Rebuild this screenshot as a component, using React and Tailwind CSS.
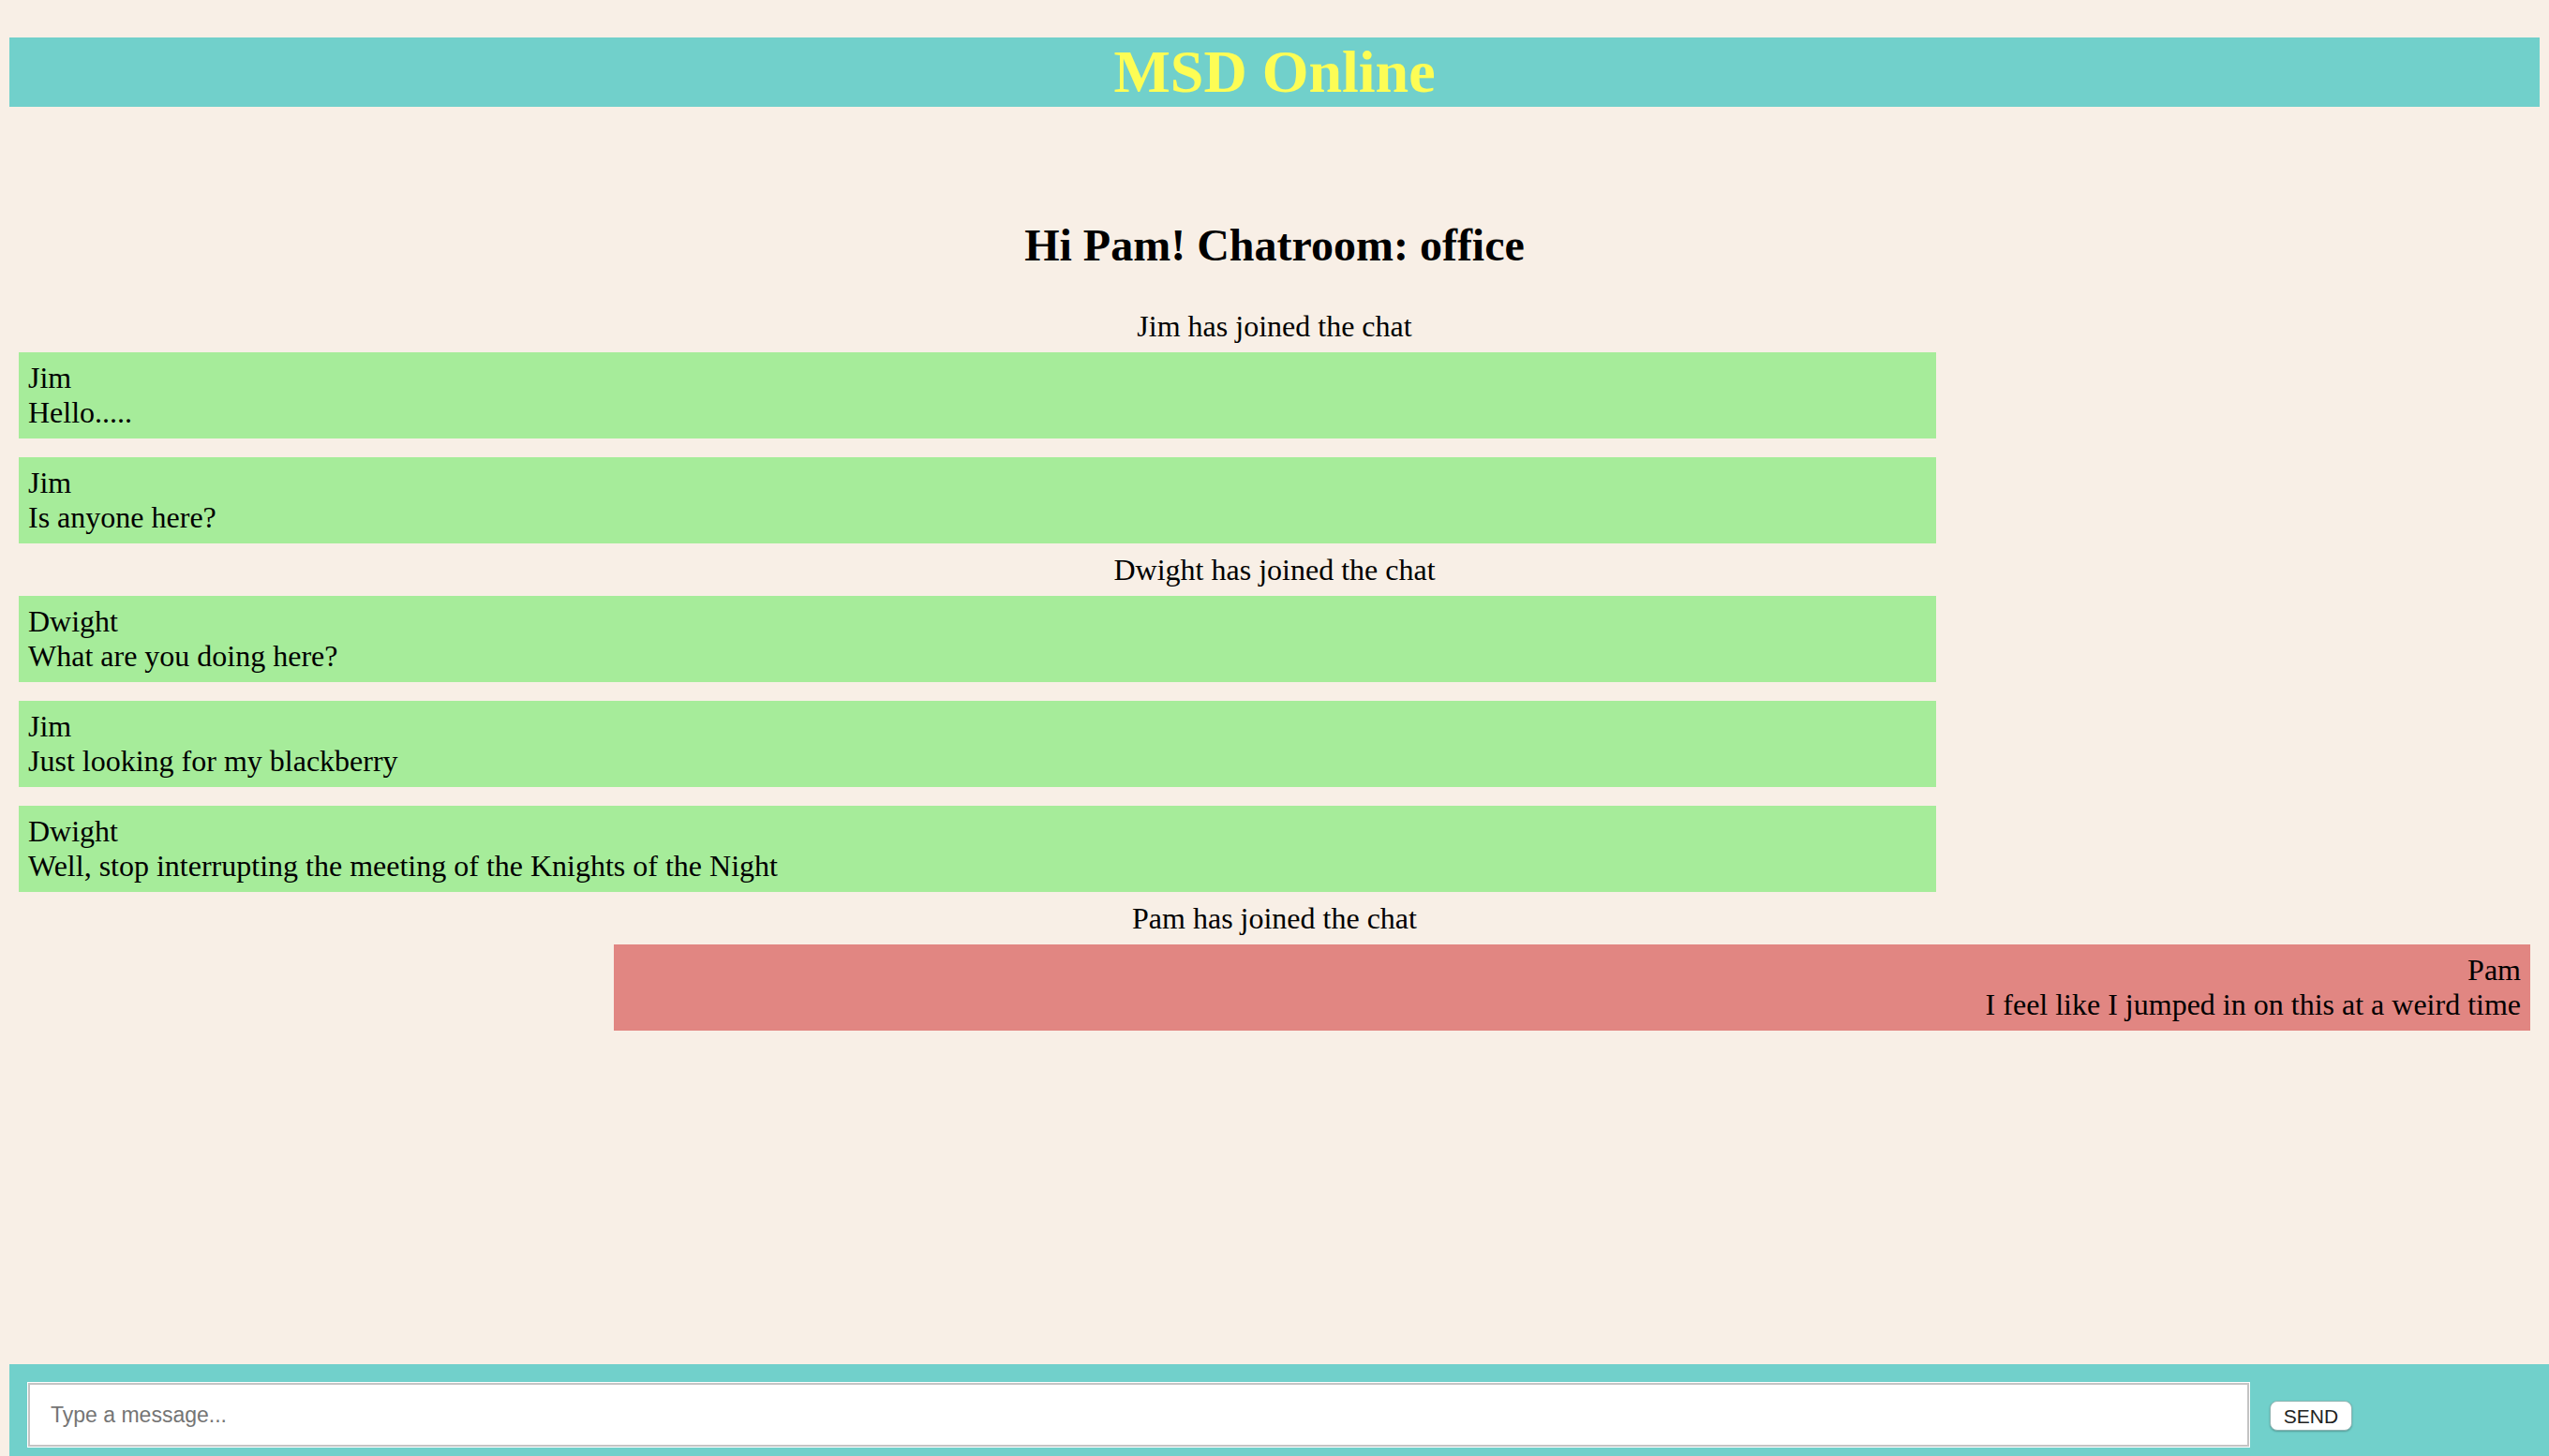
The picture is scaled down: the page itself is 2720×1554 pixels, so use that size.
const feed = [
  { id: 1, kind: "join", text: "Jim has joined the chat" },
  { id: 2, kind: "msg", user: "Jim", text: "Hello....." },
  { id: 3, kind: "msg", user: "Jim", text: "Is anyone here?" },
  { id: 4, kind: "join", text: "Dwight has joined the chat" },
  { id: 5, kind: "msg", user: "Dwight", text: "What are you doing here?" },
  { id: 6, kind: "msg", user: "Jim", text: "Just looking for my blackberry" },
  { id: 7, kind: "msg", user: "Dwight", text: "Well, stop interrupting the meeting of the Knights of the Night" },
  { id: 8, kind: "join", text: "Pam has joined the chat" },
  { id: 9, kind: "msg", user: "Pam", text: "I feel like I jumped in on this at a weird time", mine: true },
];

function Message({ m, spaced }) {
  return (
    <div
      className={[
        "py-[9px] px-[10px] text-[32px] leading-[37px] text-black",
        m.mine ? "w-[2045px] self-end bg-[#e18682] text-right" : "w-[2046px] bg-[#a6ec9a]",
        spaced ? "mt-[20px]" : "",
      ].join(" ")}
    >
      <div>{m.user}</div>
      <div>{m.text}</div>
    </div>
  );
}

export default function App() {
  return (
    <div className="flex h-screen flex-col overflow-hidden bg-[#f8efe6] font-['Liberation_Serif',serif]">
      <h1 className="mx-[10px] mt-[40px] h-[74px] bg-[#71d0cb] text-center text-[64px] font-bold leading-[74px] text-[#fdfd55]">
        MSD Online
      </h1>

      <h2 className="mt-[120px] text-center text-[48px] font-bold leading-[55px] text-black">
        Hi Pam! Chatroom: office
      </h2>

      <div className="mt-[31px] flex flex-col px-[20px]">
        {feed.map((m, i) => {
          if (m.kind === "join") {
            return (
              <div key={m.id} className="py-[10px] text-center text-[32px] leading-[36px] text-black">
                {m.text}
              </div>
            );
          }
          const prev = feed[i - 1];
          return <Message key={m.id} m={m} spaced={prev && prev.kind === "msg"} />;
        })}
      </div>

      <div className="ml-[10px] mt-auto flex h-[98px] shrink-0 items-start bg-[#71d0cb] pl-[20px] pt-[20px]">
        <input
          type="text"
          placeholder="Type a message..."
          className="h-[68px] w-[2370px] border-2 border-[#c4c4c4] bg-white pl-[22px] font-['Liberation_Sans',sans-serif] text-[23px] text-black shadow-[0_0_0_1px_#ffffff] outline-none placeholder:text-[#757575]"
        />
        <button
          type="button"
          className="ml-[22px] mt-[19px] h-[32px] w-[88px] rounded-[8px] border border-[#8fb5b3] bg-white font-['Liberation_Sans',sans-serif] text-[21px] leading-none text-[#222222] shadow-[0_1px_2px_rgba(0,0,0,0.25)]"
        >
          SEND
        </button>
      </div>
    </div>
  );
}
